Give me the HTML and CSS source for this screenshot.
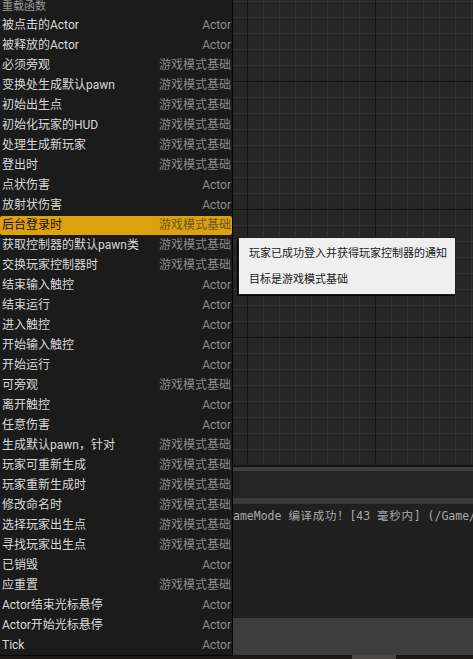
FILE: index.html
```html
<!DOCTYPE html>
<html lang="zh">
<head>
<meta charset="utf-8">
<link rel="stylesheet" href="styles.css">
</head>
<body>
<div class="editor">
  <div class="graph"></div>
  <div class="graph-edge"></div>
  <div class="split"></div>
  <div class="tabs"></div>
  <div class="split2"></div>
  <div class="log">
    <div class="log-line">ameMode <span class="cjk">编译成功！</span>[43 <span class="cjk">毫秒内</span>] (/Game/</div>
  </div>
  <div class="footer"></div>
  <div class="status">
    <div class="sb sb-a"></div>
    <div class="sb sb-b"></div>
  </div>
</div>

<div class="menu">
  <div class="menu-head">重载函数</div>
  <div class="row"><span class="name">被点击的Actor</span><span class="cat">Actor</span></div>
  <div class="row"><span class="name">被释放的Actor</span><span class="cat">Actor</span></div>
  <div class="row"><span class="name">必须旁观</span><span class="cat">游戏模式基础</span></div>
  <div class="row"><span class="name">变换处生成默认pawn</span><span class="cat">游戏模式基础</span></div>
  <div class="row"><span class="name">初始出生点</span><span class="cat">游戏模式基础</span></div>
  <div class="row"><span class="name">初始化玩家的HUD</span><span class="cat">游戏模式基础</span></div>
  <div class="row"><span class="name">处理生成新玩家</span><span class="cat">游戏模式基础</span></div>
  <div class="row"><span class="name">登出时</span><span class="cat">游戏模式基础</span></div>
  <div class="row"><span class="name">点状伤害</span><span class="cat">Actor</span></div>
  <div class="row"><span class="name">放射状伤害</span><span class="cat">Actor</span></div>
  <div class="row selected"><span class="name">后台登录时</span><span class="cat">游戏模式基础</span></div>
  <div class="row"><span class="name">获取控制器的默认pawn类</span><span class="cat">游戏模式基础</span></div>
  <div class="row"><span class="name">交换玩家控制器时</span><span class="cat">游戏模式基础</span></div>
  <div class="row"><span class="name">结束输入触控</span><span class="cat">Actor</span></div>
  <div class="row"><span class="name">结束运行</span><span class="cat">Actor</span></div>
  <div class="row"><span class="name">进入触控</span><span class="cat">Actor</span></div>
  <div class="row"><span class="name">开始输入触控</span><span class="cat">Actor</span></div>
  <div class="row"><span class="name">开始运行</span><span class="cat">Actor</span></div>
  <div class="row"><span class="name">可旁观</span><span class="cat">游戏模式基础</span></div>
  <div class="row"><span class="name">离开触控</span><span class="cat">Actor</span></div>
  <div class="row"><span class="name">任意伤害</span><span class="cat">Actor</span></div>
  <div class="row"><span class="name">生成默认pawn，针对</span><span class="cat">游戏模式基础</span></div>
  <div class="row"><span class="name">玩家可重新生成</span><span class="cat">游戏模式基础</span></div>
  <div class="row"><span class="name">玩家重新生成时</span><span class="cat">游戏模式基础</span></div>
  <div class="row"><span class="name">修改命名时</span><span class="cat">游戏模式基础</span></div>
  <div class="row"><span class="name">选择玩家出生点</span><span class="cat">游戏模式基础</span></div>
  <div class="row"><span class="name">寻找玩家出生点</span><span class="cat">游戏模式基础</span></div>
  <div class="row"><span class="name">已销毁</span><span class="cat">Actor</span></div>
  <div class="row"><span class="name">应重置</span><span class="cat">游戏模式基础</span></div>
  <div class="row"><span class="name">Actor结束光标悬停</span><span class="cat">Actor</span></div>
  <div class="row"><span class="name">Actor开始光标悬停</span><span class="cat">Actor</span></div>
  <div class="row"><span class="name">Tick</span><span class="cat">Actor</span></div>
</div>

<div class="tooltip">
  <div class="tip-line">玩家已成功登入并获得玩家控制器的通知</div>
  <div class="tip-line">目标是游戏模式基础</div>
</div>
</body>
</html>
```

FILE: styles.css
```css
html, body {
  margin: 0;
  padding: 0;
  width: 473px;
  height: 659px;
  overflow: hidden;
  background: #1b1616;
}

body {
  position: relative;
  font-family: "Roboto", "Noto Sans CJK SC", sans-serif;
}

.editor {
  display: flex;
  flex-direction: column;
  width: 473px;
  height: 659px;
}

.graph {
  height: 465px;
  background-color: #262626;
  background-image:
    linear-gradient(to right, #141414 0, #141414 1px, transparent 1px),
    linear-gradient(to bottom, #141414 0, #141414 1px, transparent 1px),
    linear-gradient(to right, #323232 0, #323232 1px, transparent 1px),
    linear-gradient(to bottom, #323232 0, #323232 1px, transparent 1px);
  background-size: 128px 128px, 128px 128px, 16px 16px, 16px 16px;
  background-position: 119px 0, 0 81px, 7px 0, 0 1px;
}

.graph-edge {
  height: 2px;
  background: #131313;
}

.split {
  height: 4px;
  background: #3e3e3e;
}

.tabs {
  height: 27px;
  background: #242424;
}

.split2 {
  height: 6px;
  background: #3a3a3a;
}

.log {
  height: 114px;
  background: #202020;
  padding-top: 5px;
  box-sizing: border-box;
  overflow: hidden;
}

.log-line {
  padding-left: 233px;
  font-family: "DejaVu Sans Mono", "Noto Sans CJK SC", monospace;
  font-size: 11.5px;
  line-height: 14px;
  color: #a8a8a8;
  white-space: nowrap;
}

.log-line .cjk {
  letter-spacing: 0.7px;
}

.footer {
  height: 37px;
  background: #3d3d3d;
}

.status {
  flex: 1;
  position: relative;
  background: #1d1717;
  display: flex;
}

.sb {
  height: 100%;
}

.sb-a {
  width: 153px;
  border-top: 1px solid #4a4a4a;
  box-sizing: border-box;
}

.sb-b {
  margin-left: 199px;
  width: 44px;
  background: #4b4747;
}

/* Dropdown menu overlay */
.menu {
  position: absolute;
  left: 0;
  top: 0;
  width: 232px;
  height: 655px;
  background: #1b1b1b;
  border-right: 1px solid #050505;
  border-bottom: 1px solid #050505;
  overflow: hidden;
}

.menu-head {
  height: 15px;
  padding-left: 2px;
  font-size: 11px;
  line-height: 14px;
  color: #9a9a9a;
}

.row {
  height: 20px;
  box-sizing: border-box;
  display: flex;
  justify-content: space-between;
  align-items: center;
  padding: 1px 1px 0 2px;
  font-size: 12px;
  line-height: 19px;
  white-space: nowrap;
}

.row .name {
  color: #d8d8d8;
}

.row .cat {
  color: #8a8a8a;
}

.row.selected {
  background: #dda10d;
  border-radius: 2px;
  height: 19px;
  margin-top: 1px;
  padding-top: 0;
}

.row.selected .name {
  color: #101010;
}

.row.selected .cat {
  color: #6a5628;
}

/* Tooltip overlay */
.tooltip {
  position: absolute;
  left: 238px;
  top: 237px;
  width: 218px;
  height: 58px;
  box-sizing: border-box;
  background: #efefef;
  border: 1px solid #202020;
  box-shadow: -1px 1px 0 #000;
  padding: 8px 0 0 10px;
}

.tip-line {
  font-family: "Noto Sans CJK SC", sans-serif;
  font-size: 11px;
  line-height: 13px;
  color: #1a1a1a;
  margin-bottom: 13px;
  white-space: nowrap;
}
```
